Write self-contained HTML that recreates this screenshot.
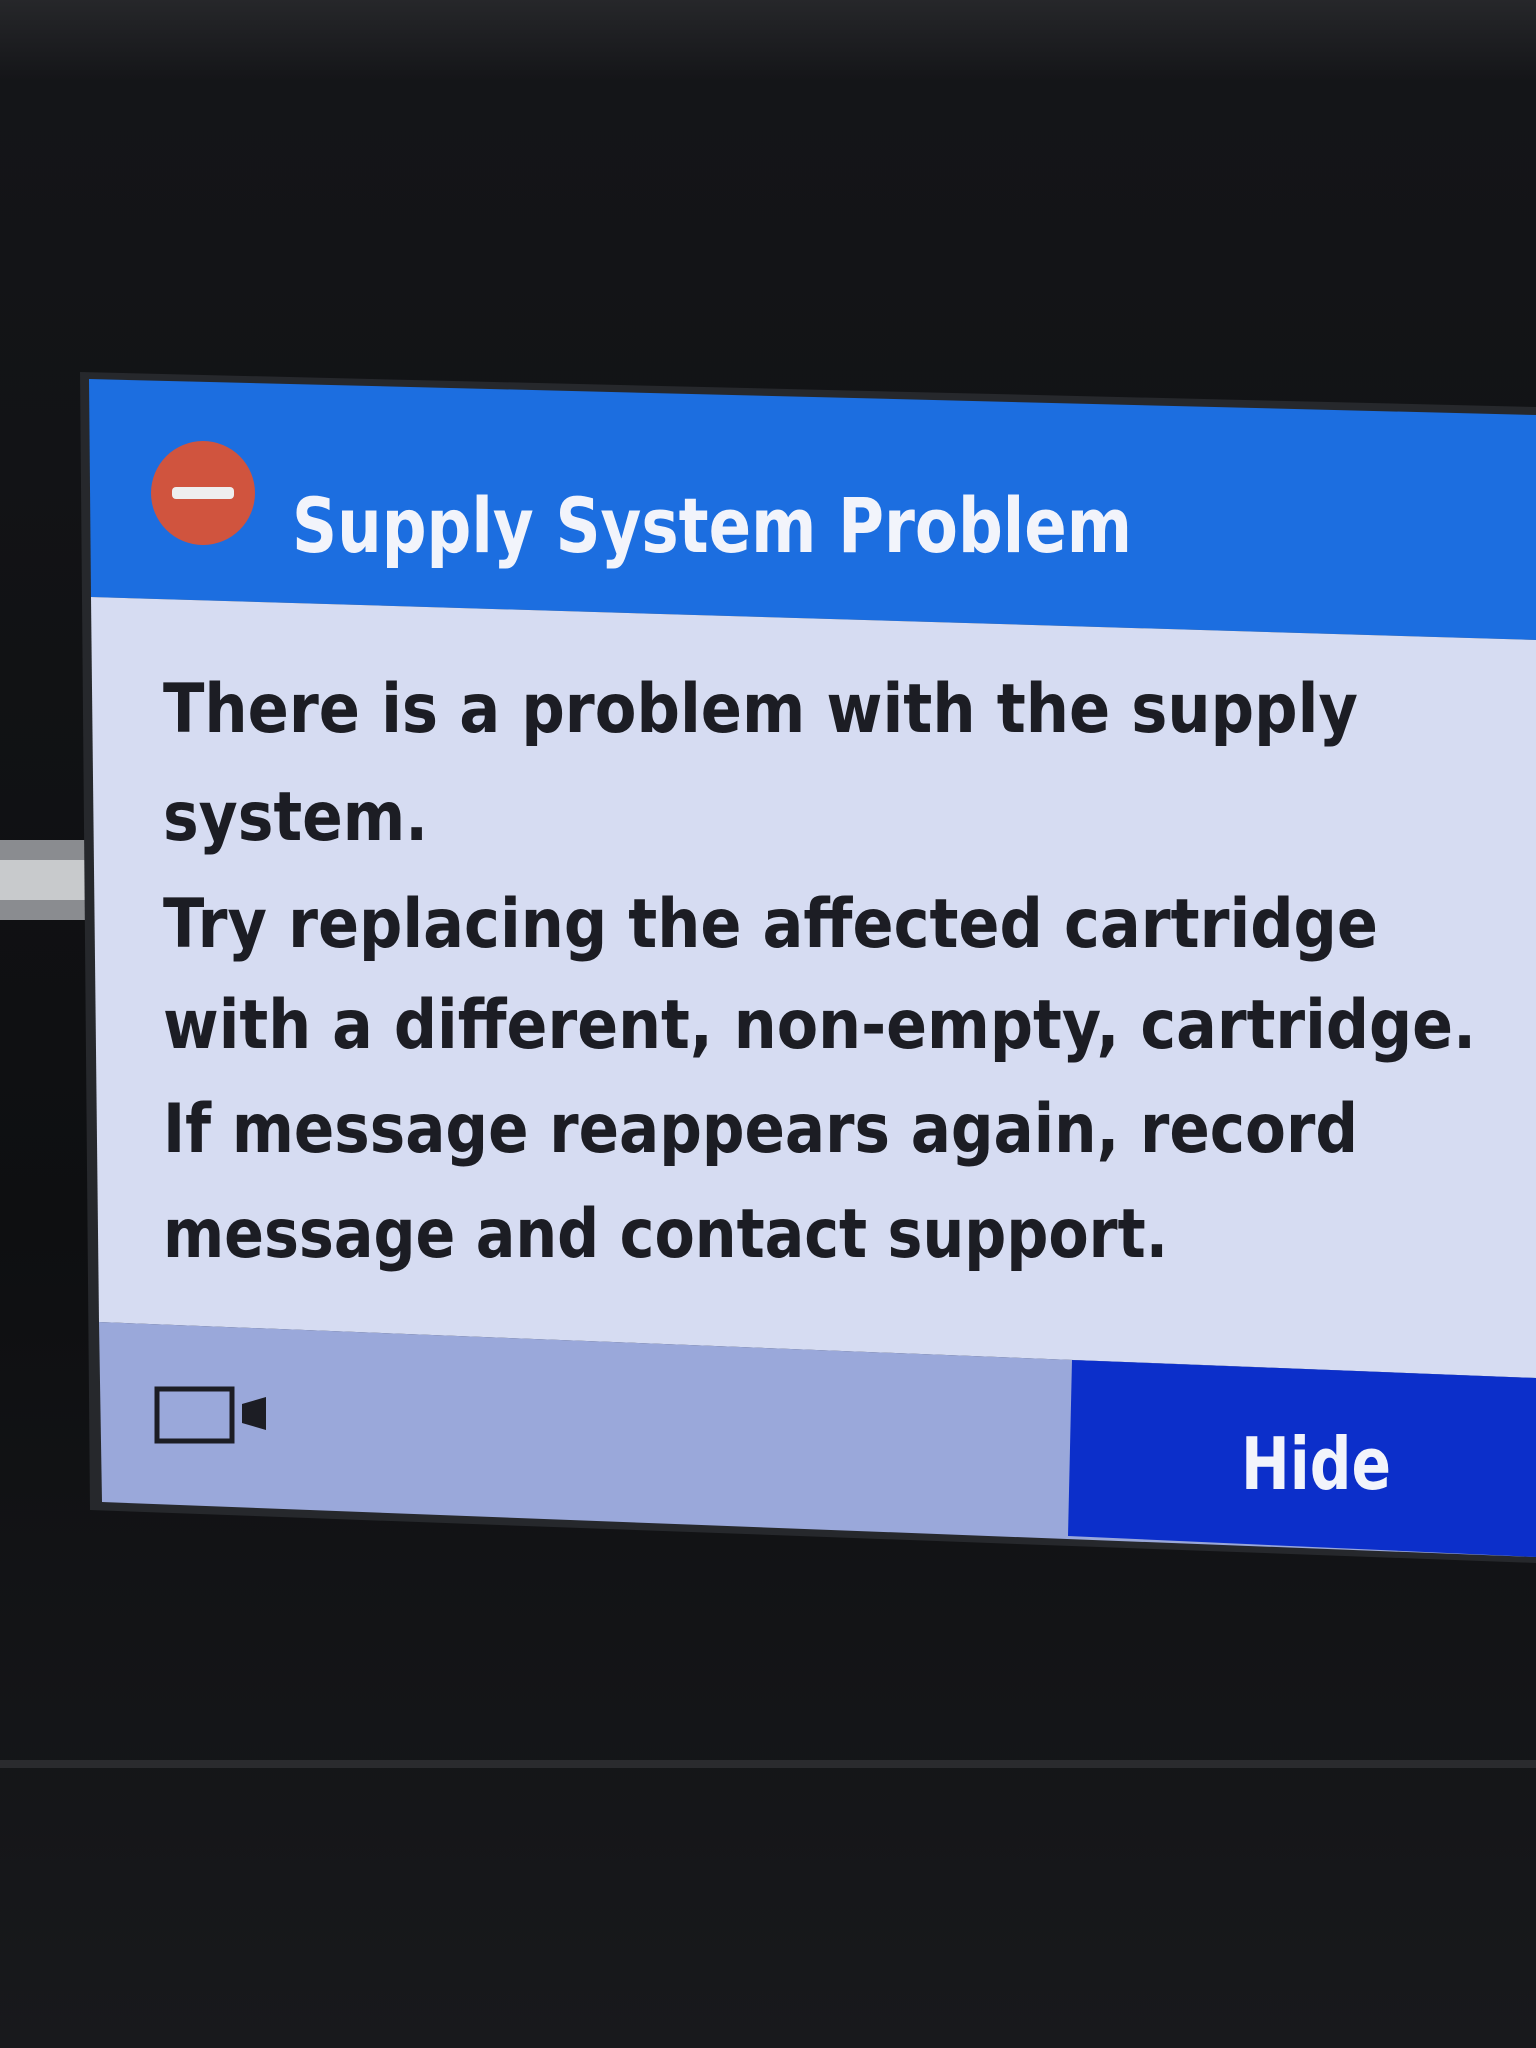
<!DOCTYPE html>
<html><head><style>
html,body{margin:0;padding:0;background:#111214;width:1536px;height:2048px;overflow:hidden}
svg{display:block}
</style></head><body>
<svg width="1536" height="2048" viewBox="0 0 1536 2048" xmlns="http://www.w3.org/2000/svg">
<defs>
<linearGradient id="bg" x1="0" y1="0" x2="0" y2="1">
<stop offset="0" stop-color="#26272a"/><stop offset="0.04" stop-color="#141518"/><stop offset="0.6" stop-color="#0e0f11"/><stop offset="1" stop-color="#18191c"/>
</linearGradient>
</defs>
<rect width="1536" height="2048" fill="url(#bg)"/>
<rect x="0" y="840" width="90" height="80" fill="#8a8c90"/>
<rect x="0" y="860" width="90" height="40" fill="#c8cacc"/>
<rect x="0" y="1760" width="1536" height="8" fill="#2a2b2e"/>
<polygon points="80,372 1536,407 1536,1563 90,1510" fill="#26282c"/>
<polygon points="89,379 1536,415 1536,640 91,597" fill="#1c6ee0"/>
<polygon points="91,597 1536,640 1536,1378 99,1322" fill="#d6dcf2"/>
<polygon points="99,1322 1536,1378 1536,1557 102,1502" fill="#9aa8da"/>
<polygon points="1072,1360 1536,1378 1536,1557 1068,1536" fill="#0c2fca"/>
<circle cx="203" cy="493" r="52" fill="#d0543e"/>
<rect x="172" y="487" width="62" height="12" rx="4" fill="#eee"/>
<text x="292" y="552" font-family="DejaVu Sans, sans-serif" font-weight="bold" font-size="76" fill="#f2f4fb" textLength="840" lengthAdjust="spacingAndGlyphs">Supply System Problem</text>
<g font-family="DejaVu Sans, sans-serif" font-weight="bold" font-size="68" fill="#1c1d24">
<text x="163" y="732" textLength="1195" lengthAdjust="spacingAndGlyphs">There is a problem with the supply</text>
<text x="163" y="840" textLength="265" lengthAdjust="spacingAndGlyphs">system.</text>
<text x="163" y="947" textLength="1215" lengthAdjust="spacingAndGlyphs">Try replacing the affected cartridge</text>
<text x="163" y="1048" textLength="1313" lengthAdjust="spacingAndGlyphs">with a different, non-empty, cartridge.</text>
<text x="163" y="1152" textLength="1195" lengthAdjust="spacingAndGlyphs">If message reappears again, record</text>
<text x="163" y="1257" textLength="1005" lengthAdjust="spacingAndGlyphs">message and contact support.</text>
</g>
<rect x="157" y="1389" width="75" height="52" fill="none" stroke="#1c1d24" stroke-width="5"/>
<polygon points="242,1404 266,1397 266,1430 242,1423" fill="#1c1d24"/>
<text x="1241" y="1489" font-family="DejaVu Sans, sans-serif" font-weight="bold" font-size="72" fill="#f2f4fb" textLength="150" lengthAdjust="spacingAndGlyphs">Hide</text>
</svg>
</body></html>
